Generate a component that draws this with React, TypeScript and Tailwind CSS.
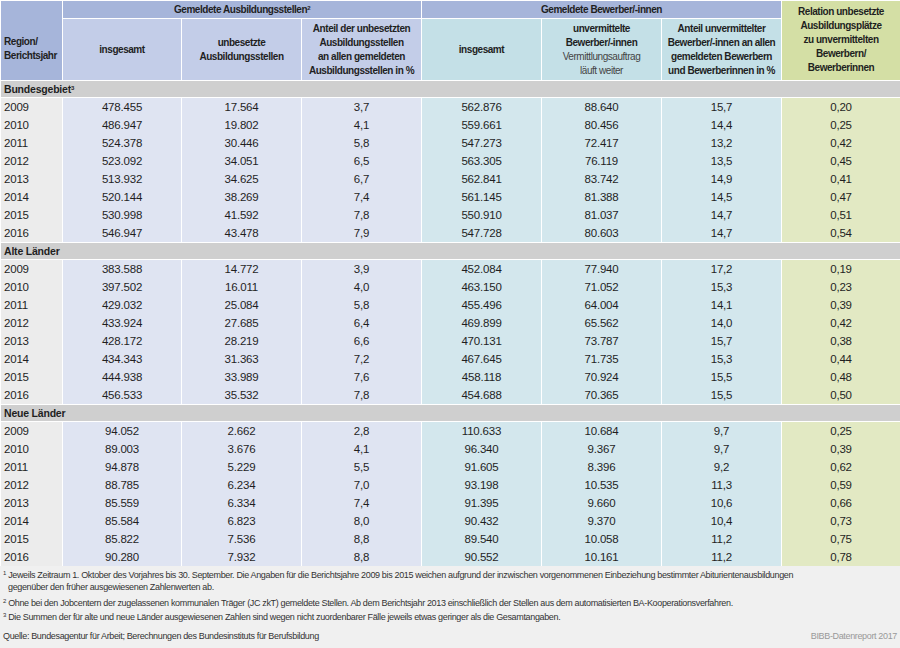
const sections = [
  {
    title: "Bundesgebiet",
    sup: "3",
    rows: [
      ["2009", "478.455", "17.564", "3,7", "562.876", "88.640", "15,7", "0,20"],
      ["2010", "486.947", "19.802", "4,1", "559.661", "80.456", "14,4", "0,25"],
      ["2011", "524.378", "30.446", "5,8", "547.273", "72.417", "13,2", "0,42"],
      ["2012", "523.092", "34.051", "6,5", "563.305", "76.119", "13,5", "0,45"],
      ["2013", "513.932", "34.625", "6,7", "562.841", "83.742", "14,9", "0,41"],
      ["2014", "520.144", "38.269", "7,4", "561.145", "81.388", "14,5", "0,47"],
      ["2015", "530.998", "41.592", "7,8", "550.910", "81.037", "14,7", "0,51"],
      ["2016", "546.947", "43.478", "7,9", "547.728", "80.603", "14,7", "0,54"],
    ],
  },
  {
    title: "Alte Länder",
    sup: "",
    rows: [
      ["2009", "383.588", "14.772", "3,9", "452.084", "77.940", "17,2", "0,19"],
      ["2010", "397.502", "16.011", "4,0", "463.150", "71.052", "15,3", "0,23"],
      ["2011", "429.032", "25.084", "5,8", "455.496", "64.004", "14,1", "0,39"],
      ["2012", "433.924", "27.685", "6,4", "469.899", "65.562", "14,0", "0,42"],
      ["2013", "428.172", "28.219", "6,6", "470.131", "73.787", "15,7", "0,38"],
      ["2014", "434.343", "31.363", "7,2", "467.645", "71.735", "15,3", "0,44"],
      ["2015", "444.938", "33.989", "7,6", "458.118", "70.924", "15,5", "0,48"],
      ["2016", "456.533", "35.532", "7,8", "454.688", "70.365", "15,5", "0,50"],
    ],
  },
  {
    title: "Neue Länder",
    sup: "",
    rows: [
      ["2009", "94.052", "2.662", "2,8", "110.633", "10.684", "9,7", "0,25"],
      ["2010", "89.003", "3.676", "4,1", "96.340", "9.367", "9,7", "0,39"],
      ["2011", "94.878", "5.229", "5,5", "91.605", "8.396", "9,2", "0,62"],
      ["2012", "88.785", "6.234", "7,0", "93.198", "10.535", "11,3", "0,59"],
      ["2013", "85.559", "6.334", "7,4", "91.395", "9.660", "10,6", "0,66"],
      ["2014", "85.584", "6.823", "8,0", "90.432", "9.370", "10,4", "0,73"],
      ["2015", "85.822", "7.536", "8,8", "89.540", "10.058", "11,2", "0,75"],
      ["2016", "90.280", "7.932", "8,8", "90.552", "10.161", "11,2", "0,78"],
    ],
  },
];

const cellBg = [
  "bg-[#ececec]",
  "bg-[#dfe4f2]",
  "bg-[#dfe4f2]",
  "bg-[#dfe4f2]",
  "bg-[#d3e7ed]",
  "bg-[#d3e7ed]",
  "bg-[#d3e7ed]",
  "bg-[#e2e9c3]",
];

const th = "border border-white p-0 whitespace-nowrap";

export default function App() {
  return (
    <div
      className="w-[900px] h-[648px] bg-[#f0f0f0] text-[#1f1f1f] overflow-hidden"
      style={{ fontFamily: '"Liberation Sans", Arial, sans-serif' }}
    >
      <table className="w-[900px] table-fixed border-collapse text-[11.5px] tracking-[-0.2px]">
        <colgroup>
          <col className="w-[62px]" />
          <col className="w-[119px]" />
          <col className="w-[120px]" />
          <col className="w-[120px]" />
          <col className="w-[120px]" />
          <col className="w-[120px]" />
          <col className="w-[120px]" />
          <col className="w-[119px]" />
        </colgroup>
        <thead className="font-bold text-[10px] leading-[14px] tracking-[-0.45px]">
          <tr className="h-[18px]">
            <th rowSpan={2} className={`${th} bg-[#a6b5da] text-left align-middle pl-[3px] pt-[16px]`}>
              Region/
              <br />
              Berichtsjahr
            </th>
            <th colSpan={3} className={`${th} bg-[#a6b5da] text-center`}>
              Gemeldete Ausbildungsstellen<sup className="text-[6px]">2</sup>
            </th>
            <th colSpan={3} className={`${th} bg-[#a6b5da] text-center`}>
              Gemeldete Bewerber/-innen
            </th>
            <th rowSpan={2} className={`${th} bg-[#d4dfa5] text-center align-top pt-[4px]`}>
              Relation unbesetzte
              <br />
              Ausbildungsplätze
              <br />
              zu unvermittelten
              <br />
              Bewerbern/
              <br />
              Bewerberinnen
            </th>
          </tr>
          <tr className="h-[62px]">
            <th className={`${th} bg-[#c3cde8]`}>insgesamt</th>
            <th className={`${th} bg-[#c3cde8]`}>
              unbesetzte
              <br />
              Ausbildungsstellen
            </th>
            <th className={`${th} bg-[#c3cde8]`}>
              Anteil der unbesetzten
              <br />
              Ausbildungsstellen
              <br />
              an allen gemeldeten
              <br />
              Ausbildungsstellen in %
            </th>
            <th className={`${th} bg-[#c4e0e7]`}>insgesamt</th>
            <th className={`${th} bg-[#c4e0e7]`}>
              unvermittelte
              <br />
              Bewerber/-innen
              <br />
              <span className="font-normal text-[#444]">Vermittlungsauftrag</span>
              <br />
              <span className="font-normal text-[#444]">läuft weiter</span>
            </th>
            <th className={`${th} bg-[#c4e0e7]`}>
              Anteil unvermittelter
              <br />
              Bewerber/-innen an allen
              <br />
              gemeldeten Bewerbern
              <br />
              und Bewerberinnen in %
            </th>
          </tr>
        </thead>
        <tbody>
          {sections.map((s) => (
            <>
              <tr key={s.title} className="h-[17px]">
                <td colSpan={8} className="bg-[#cfcfcf] border border-white pl-[3px] p-0 font-bold text-[10.5px] leading-[15px]">
                  {s.title}
                  {s.sup && <sup className="text-[6px]">{s.sup}</sup>}
                </td>
              </tr>
              {s.rows.map((r) => (
                <tr key={s.title + r[0]} className="h-[18px]">
                  {r.map((v, i) => (
                    <td
                      key={i}
                      className={`${cellBg[i]} border-x border-white p-0 leading-[18px] ${i === 0 ? "text-left pl-[3px]" : "text-center"}`}
                    >
                      {v}
                    </td>
                  ))}
                </tr>
              ))}
            </>
          ))}
        </tbody>
      </table>
      <div className="px-[3px] pt-[3px] text-[9px] leading-[12px] tracking-[-0.35px] text-[#333] whitespace-nowrap">
        <p>
          <sup className="text-[6px]">1</sup> Jeweils Zeitraum 1. Oktober des Vorjahres bis 30. September. Die Angaben für die Berichtsjahre 2009 bis 2015 weichen aufgrund der inzwischen vorgenommenen Einbeziehung bestimmter Abiturientenausbildungen
        </p>
        <p className="pl-[5px] mb-[4px]">gegenüber den früher ausgewiesenen Zahlenwerten ab.</p>
        <p className="mb-[2px]">
          <sup className="text-[6px]">2</sup> Ohne bei den Jobcentern der zugelassenen kommunalen Träger (JC zkT) gemeldete Stellen. Ab dem Berichtsjahr 2013 einschließlich der Stellen aus dem automatisierten BA-Kooperationsverfahren.
        </p>
        <p>
          <sup className="text-[6px]">3</sup> Die Summen der für alte und neue Länder ausgewiesenen Zahlen sind wegen nicht zuordenbarer Fälle jeweils etwas geringer als die Gesamtangaben.
        </p>
        <div className="flex justify-between items-center mt-[7px]">
          <span>Quelle: Bundesagentur für Arbeit; Berechnungen des Bundesinstituts für Berufsbildung</span>
          <span className="text-[#999]">BIBB-Datenreport 2017</span>
        </div>
      </div>
    </div>
  );
}
